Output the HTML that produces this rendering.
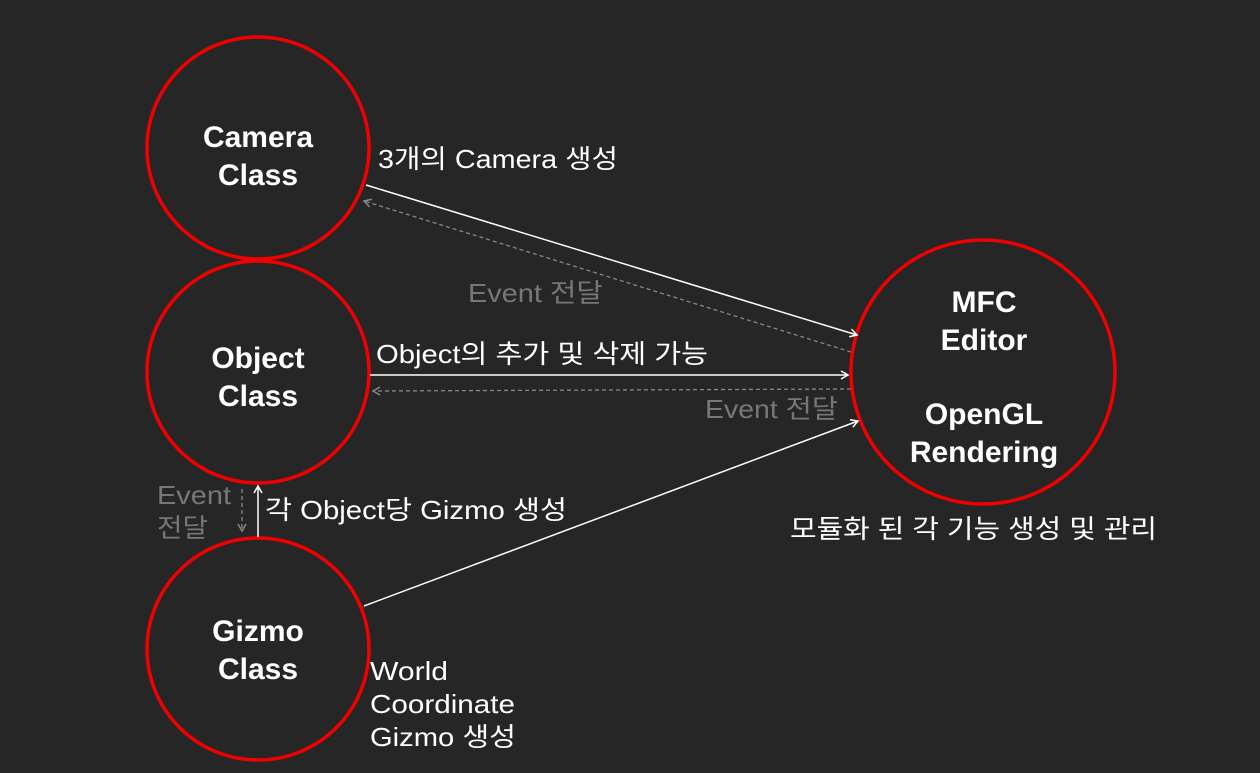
<!DOCTYPE html><html><head><meta charset="utf-8"><style>
body{margin:0;background:#262626;width:1260px;height:768px;overflow:hidden}
svg text{font-family:"Liberation Sans","Noto Sans CJK KR",sans-serif}
</style></head><body>
<svg width="1260" height="768" viewBox="0 0 1260 768">
<defs>
<marker id="a" markerWidth="10" markerHeight="10" refX="8" refY="5" orient="auto" markerUnits="userSpaceOnUse"><path d="M1,1 L8,5 L1,9" fill="none" stroke="#fff" stroke-width="1.5"/></marker>
<marker id="g" markerWidth="10" markerHeight="10" refX="8" refY="5" orient="auto" markerUnits="userSpaceOnUse"><path d="M1,1 L8,5 L1,9" fill="none" stroke="#888" stroke-width="1.5"/></marker>
</defs>
<g fill="none" stroke="#f00000" stroke-width="3.5">
<circle cx="258" cy="148" r="111"/>
<circle cx="258" cy="372" r="111"/>
<circle cx="258" cy="649" r="111"/>
<circle cx="983" cy="372" r="132"/>
</g>
<g stroke="#fff" stroke-width="1.5" fill="none">
<line x1="366" y1="185" x2="857" y2="335" marker-end="url(#a)"/>
<line x1="370" y1="375" x2="848" y2="375" marker-end="url(#a)"/>
<line x1="364" y1="606" x2="858" y2="421" marker-end="url(#a)"/>
<line x1="258" y1="537" x2="258" y2="486" marker-end="url(#a)"/>
</g>
<g stroke="#888" stroke-width="1.3" fill="none" stroke-dasharray="4,3">
<line x1="851" y1="352" x2="364" y2="201" marker-end="url(#g)"/>
<line x1="851" y1="389" x2="373" y2="391" marker-end="url(#g)"/>
<line x1="242" y1="489" x2="242" y2="531" marker-end="url(#g)"/>
</g>
<g fill="#fff" font-weight="bold" font-size="30" text-anchor="middle">
<text x="258" y="147">Camera</text><text x="258" y="185">Class</text>
<text x="258" y="368">Object</text><text x="258" y="406">Class</text>
<text x="258" y="641">Gizmo</text><text x="258" y="679">Class</text>
<text x="984" y="312">MFC</text><text x="984" y="350">Editor</text>
<text x="984" y="424">OpenGL</text><text x="984" y="462">Rendering</text>
</g>
<g fill="#fff" font-size="26" lengthAdjust="spacingAndGlyphs">
<text x="378" y="168" textLength="240" lengthAdjust="spacingAndGlyphs">3개의 Camera 생성</text>
<text x="376" y="363" textLength="332" lengthAdjust="spacingAndGlyphs">Object의 추가 및 삭제 가능</text>
<text x="265" y="519" textLength="302" lengthAdjust="spacingAndGlyphs">각 Object당 Gizmo 생성</text>
<text x="790" y="538" textLength="367" lengthAdjust="spacingAndGlyphs">모듈화 된 각 기능 생성 및 관리</text>
<text x="370" y="680" textLength="78" lengthAdjust="spacingAndGlyphs">World</text>
<text x="370" y="713" textLength="145" lengthAdjust="spacingAndGlyphs">Coordinate</text>
<text x="370" y="746" textLength="146" lengthAdjust="spacingAndGlyphs">Gizmo 생성</text>
</g>
<g fill="#777" font-size="26">
<text x="468" y="302" textLength="135" lengthAdjust="spacingAndGlyphs">Event 전달</text>
<text x="705" y="418" textLength="133" lengthAdjust="spacingAndGlyphs">Event 전달</text>
<text x="157" y="504" textLength="74" lengthAdjust="spacingAndGlyphs">Event</text>
<text x="157" y="537" textLength="51" lengthAdjust="spacingAndGlyphs">전달</text>
</g>
</svg>
</body></html>
